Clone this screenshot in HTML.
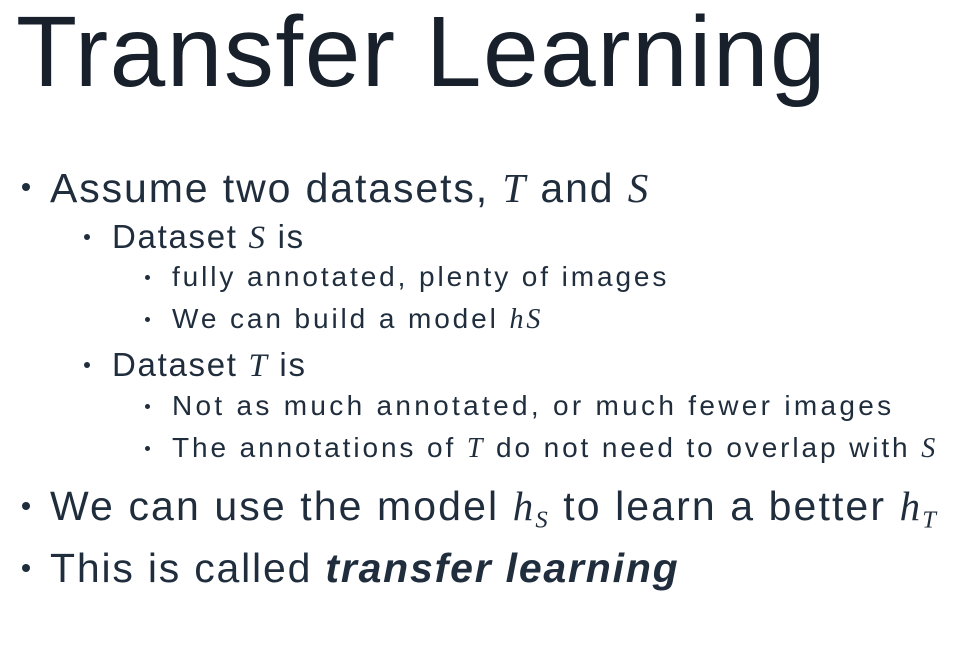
<!DOCTYPE html>
<html><head><meta charset="utf-8"><style>
body{margin:0;width:976px;height:645px;background:#fff;overflow:hidden;position:relative;color:#1f2d3d;font-family:"Liberation Sans",sans-serif}
.l{position:absolute;white-space:nowrap;line-height:1}
.m{font-family:"Liberation Serif",serif;font-style:italic}
sub{font-size:0.6em;vertical-align:-0.3em}
.b{position:absolute;border-radius:50%;background:#1f2d3d}
</style></head><body>
<div class="l" style="left:16px;top:2px;font-size:100px;letter-spacing:1.5px;color:#17202b">Transfer Learning</div>

<div class="b" style="left:22px;top:183px;width:8px;height:8px"></div>
<div class="l" style="left:50px;top:168px;font-size:41px;letter-spacing:1.9px">Assume two datasets, <span class="m">T</span> and <span class="m">S</span></div>

<div class="b" style="left:84px;top:234px;width:6px;height:6px"></div>
<div class="l" style="left:112px;top:220px;font-size:33px;letter-spacing:1.7px">Dataset <span class="m">S</span> is</div>

<div class="b" style="left:145px;top:275px;width:5px;height:5px"></div>
<div class="l" style="left:172px;top:263px;font-size:28px;letter-spacing:2.9px">fully annotated, plenty of images</div>
<div class="b" style="left:145px;top:317px;width:5px;height:5px"></div>
<div class="l" style="left:172px;top:305px;font-size:28px;letter-spacing:2.9px">We can build a model <span class="m">hS</span></div>

<div class="b" style="left:84px;top:362px;width:6px;height:6px"></div>
<div class="l" style="left:112px;top:348px;font-size:33px;letter-spacing:1.7px">Dataset <span class="m">T</span> is</div>

<div class="b" style="left:145px;top:404px;width:5px;height:5px"></div>
<div class="l" style="left:172px;top:392px;font-size:28px;letter-spacing:3.3px">Not as much annotated, or much fewer images</div>
<div class="b" style="left:145px;top:446px;width:5px;height:5px"></div>
<div class="l" style="left:172px;top:434px;font-size:28px;letter-spacing:2.9px">The annotations of <span class="m">T</span> do not need to overlap with <span class="m">S</span></div>

<div class="b" style="left:22px;top:502px;width:8px;height:8px"></div>
<div class="l" style="left:50px;top:486px;font-size:41px;letter-spacing:2.1px">We can use the model <span class="m">h<sub>S</sub></span> to learn a better <span class="m">h<sub>T</sub></span></div>

<div class="b" style="left:22px;top:564px;width:8px;height:8px"></div>
<div class="l" style="left:50px;top:548px;font-size:41px;letter-spacing:1.8px">This is called <b><i>transfer learning</i></b></div>
</body></html>
